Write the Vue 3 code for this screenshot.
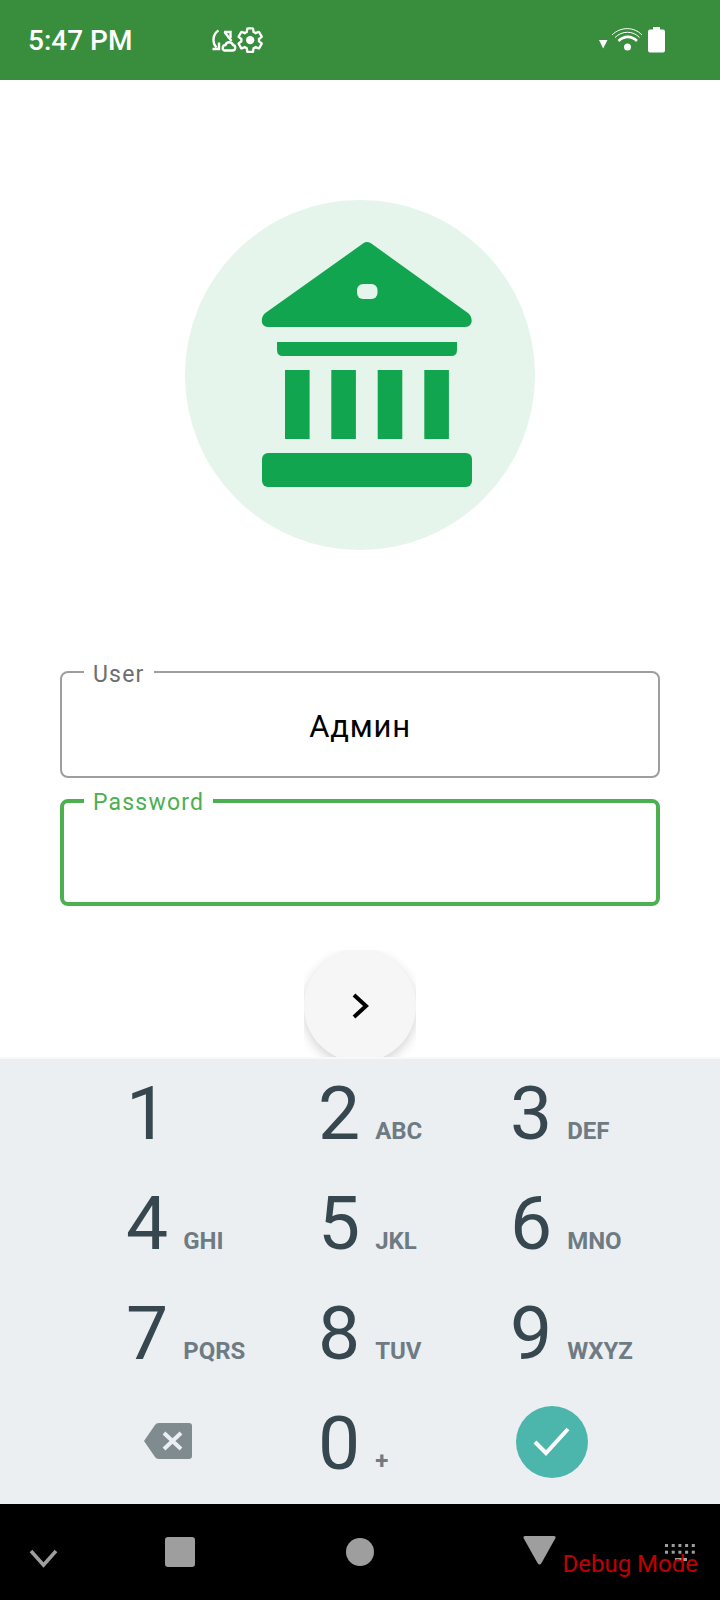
<template>
  <div class="screen">
    <!-- status bar -->
    <div class="status-bar">
      <span class="time">5:47 PM</span>
      <svg class="sync-icon" width="54" height="26" viewBox="0 0 54 26">
        <g fill="none" stroke="#fff" stroke-width="2.400">
          <path d="M7.500 3.500C1.500 7 1 16 5.500 20.500" />
          <path d="M1.500 22H8V15.500" />
          <path d="M13 5H19.500V11" />
          <path d="M13.500 5L20.500 14" />
          <path d="M13.500 23.500H21.500C25 23.500 25 18.500 22 18C20.500 14 15.500 14.500 14.500 18C11 18 11 23.500 13.500 23.500Z" />
        </g>
        <g transform="translate(25 -1) scale(1.180)">
          <path fill="none" stroke="#fff" stroke-width="2" d="M19.430 12.980c.04-.32.07-.64.07-.98 0-.34-.03-.66-.07-.98l2.110-1.650c.19-.15.24-.42.12-.64l-2-3.460c-.09-.16-.26-.25-.44-.25-.06 0-.12.01-.17.03l-2.490 1c-.52-.4-1.080-.73-1.690-.98l-.38-2.650C14.460 2.180 14.250 2 14 2h-4c-.25 0-.46.18-.49.42l-.38 2.650c-.61.25-1.170.59-1.690.98l-2.490-1c-.06-.02-.12-.03-.18-.03-.17 0-.34.09-.43.25l-2 3.460c-.13.22-.07.49.12.64l2.110 1.650c-.04.32-.07.65-.07.98 0 .33.03.66.07.98l-2.110 1.650c-.19.15-.24.42-.12.64l2 3.460c.09.16.26.25.44.25.06 0 .12-.01.17-.03l2.490-1c.52.4 1.080.73 1.690.98l.38 2.650c.03.24.24.42.49.42h4c.25 0 .46-.18.49-.42l.38-2.650c.61-.25 1.170-.59 1.690-.98l2.490 1c.06.02.12.03.18.03.17 0 .34-.09.43-.25l2-3.460c.12-.22.07-.49-.12-.64l-2.110-1.650z" />
          <circle cx="12" cy="12" r="3.500" fill="#fff" />
        </g>
      </svg>
      <svg class="signal-icon" width="69" height="26" viewBox="0 0 69 26">
        <path d="M0 13H8.500L4.200 21.500Z" fill="#fff" />
        <g fill="none" stroke="#fff">
          <path d="M13 8C21.500 -0.500 35 -0.500 43 8" stroke-width="1" />
          <path d="M16 10.500C23 3.500 34 3.500 40.500 10.500" stroke-width="1" />
          <path d="M19.500 14C25 8.500 32.500 8.500 38 14" stroke-width="2.600" />
        </g>
        <circle cx="28.500" cy="20" r="3.500" fill="#fff" />
        <rect x="49" y="2.500" width="17" height="23" rx="2" fill="#fff" />
        <rect x="54" y="0" width="7" height="4" fill="#fff" />
      </svg>
    </div>

    <!-- logo -->
    <div class="logo-circle">
      <svg width="350" height="350" viewBox="0 0 350 350">
        <g fill="#12a54f">
          <path d="M178.300 43.300Q181.700 40.500 186 43.300L283.300 113.300C288 117 288.500 127 280 127H83.300C75 127 75.500 117 80 113.300Z" />
          <path d="M92 142H272V150Q272 156 266 156H98Q92 156 92 150Z" />
          <rect x="100" y="170" width="24.600" height="69" />
          <rect x="146.300" y="170" width="24.600" height="69" />
          <rect x="192.700" y="170" width="24.600" height="69" />
          <rect x="239.300" y="170" width="24.600" height="69" />
          <rect x="77" y="253" width="210" height="34" rx="6" />
        </g>
        <rect x="172" y="84" width="20.500" height="15" rx="6" fill="#e5f5ec" />
      </svg>
    </div>

    <!-- login form -->
    <div class="form">
      <div class="field">
        <span class="field-label">User</span>
        <span class="field-value">Админ</span>
      </div>
      <div class="field focused">
        <span class="field-label">Password</span>
      </div>
    </div>

    <div class="fab-clip">
      <div class="fab">
        <svg width="24" height="30" viewBox="0 0 24 30">
          <path d="M6 4L18 15L6 26" fill="none" stroke="#000" stroke-width="4" />
        </svg>
      </div>
    </div>

    <!-- number pad -->
    <div class="keypad">
      <div v-for="key in keys" :key="key.digit" class="key">
        <span class="digit">{{ key.digit }}</span>
        <span class="letters">{{ key.letters }}</span>
      </div>
      <div class="key icon-key">
        <svg class="backspace" width="48" height="36" viewBox="0 0 48 36">
          <path d="M0 18L11 2Q12 0 15 0H45Q48 0 48 3V33Q48 36 45 36H15Q12 36 11 34Z" fill="#808b8f" />
          <path d="M20 10L37 26M37 10L20 26" stroke="#eceff2" stroke-width="4" fill="none" />
        </svg>
      </div>
      <div class="key">
        <span class="digit">0</span>
        <span class="letters plus">+</span>
      </div>
      <div class="key icon-key">
        <div class="done-btn">
          <svg width="72" height="72" viewBox="0 0 72 72">
            <path d="M19 36L30 47L52 23" fill="none" stroke="#fff" stroke-width="4" />
          </svg>
        </div>
      </div>
    </div>

    <!-- nav bar -->
    <div class="nav-bar">
      <svg width="720" height="96" viewBox="0 0 720 96">
        <path d="M31 47L43.500 61L56 47" fill="none" stroke="#9e9e9e" stroke-width="3.500" />
        <rect x="165" y="33" width="30" height="30" rx="3" fill="#9e9e9e" />
        <circle cx="360" cy="48" r="14" fill="#9e9e9e" />
        <path d="M525 32H554Q556 32 555.500 34L541.500 59Q539.500 62 537.500 59L523.500 34Q523 32 525 32Z" fill="#9e9e9e" />
        <g fill="#9e9e9e">
          <rect v-for="d in navDots" :key="d.id" :x="d.x" :y="d.y" width="3" height="3" />
          <rect x="675" y="54" width="12" height="3" />
        </g>
      </svg>
      <span class="debug">Debug Mode</span>
    </div>
  </div>
</template>

<script setup>
const keys = [
  { digit: '1', letters: '' },
  { digit: '2', letters: 'ABC' },
  { digit: '3', letters: 'DEF' },
  { digit: '4', letters: 'GHI' },
  { digit: '5', letters: 'JKL' },
  { digit: '6', letters: 'MNO' },
  { digit: '7', letters: 'PQRS' },
  { digit: '8', letters: 'TUV' },
  { digit: '9', letters: 'WXYZ' }
]

const navDots = []
for (let row = 0; row < 2; row++) {
  for (let col = 0; col < 5; col++) {
    navDots.push({ id: row + '-' + col, x: 665 + col * 6.7, y: 40 + row * 6.7 })
  }
}
</script>

<style scoped>
.screen {
  width: 720px;
  height: 1600px;
  display: flex;
  flex-direction: column;
  align-items: center;
  background: #fff;
  font-family: Roboto, "Noto Sans", sans-serif;
  overflow: hidden;
}

.status-bar {
  width: 100%;
  height: 80px;
  flex-shrink: 0;
  display: flex;
  align-items: center;
  padding-left: 28px;
  box-sizing: border-box;
  background: #388e3c;
  color: #fff;
}

.time {
  width: 183px;
  font-size: 28px;
  font-weight: 500;
}

.signal-icon {
  margin-left: 334px;
}

.logo-circle {
  width: 350px;
  height: 350px;
  margin-top: 120px;
  flex-shrink: 0;
  border-radius: 50%;
  background: #e5f5ec;
}

.logo-circle svg {
  display: block;
}

.form {
  width: 600px;
  margin-top: 121px;
  display: flex;
  flex-direction: column;
  gap: 21px;
}

.field {
  position: relative;
  height: 107px;
  box-sizing: border-box;
  display: flex;
  align-items: center;
  justify-content: center;
  border: 2px solid #9e9e9e;
  border-radius: 8px;
}

.field.focused {
  border: 4px solid #4caf50;
}

.field-label {
  position: absolute;
  top: -12px;
  left: 22px;
  padding: 0 9px;
  background: #fff;
  font-size: 23px;
  line-height: 28px;
  letter-spacing: 1.2px;
  color: #6d6d6d;
}

.focused .field-label {
  top: -14px;
  left: 20px;
  color: #4caf50;
}

.field-value {
  padding-top: 4px;
  font-size: 31px;
  letter-spacing: 0.8px;
  color: #000;
}

.fab-clip {
  width: 112px;
  height: 107px;
  margin-top: 44px;
  flex-shrink: 0;
  overflow: hidden;
}

.fab {
  width: 112px;
  height: 112px;
  display: flex;
  align-items: center;
  justify-content: center;
  border-radius: 50%;
  background: #f6f6f6;
  box-shadow: 0 4px 12px rgba(0, 0, 0, 0.18);
}

.keypad {
  width: 100%;
  height: 447px;
  flex-shrink: 0;
  box-sizing: border-box;
  display: grid;
  grid-template-columns: repeat(3, 192px);
  grid-auto-rows: 110px;
  padding: 1px 0 0 126px;
  background: linear-gradient(#f6f8f9 2px, #ebeff2 2px);
}

.key {
  display: flex;
  align-items: baseline;
  gap: 15px;
  line-height: 110px;
}

.digit {
  font-size: 75px;
  font-weight: 400;
  color: #37474f;
}

.letters {
  font-size: 24px;
  font-weight: 700;
  color: #6f7b83;
}

.icon-key {
  align-items: center;
}

.icon-key svg {
  display: block;
}

.backspace {
  margin: -4px 0 0 18px;
}

.done-btn {
  width: 72px;
  height: 72px;
  margin: -3px 0 0 5.500px;
  border-radius: 50%;
  background: #4db6ac;
}

.nav-bar {
  position: relative;
  width: 100%;
  height: 96px;
  flex-shrink: 0;
  background: #000;
}

.nav-bar svg {
  display: block;
}

.debug {
  position: absolute;
  top: 46px;
  right: 22px;
  font-size: 24px;
  color: #c00000;
}
</style>
